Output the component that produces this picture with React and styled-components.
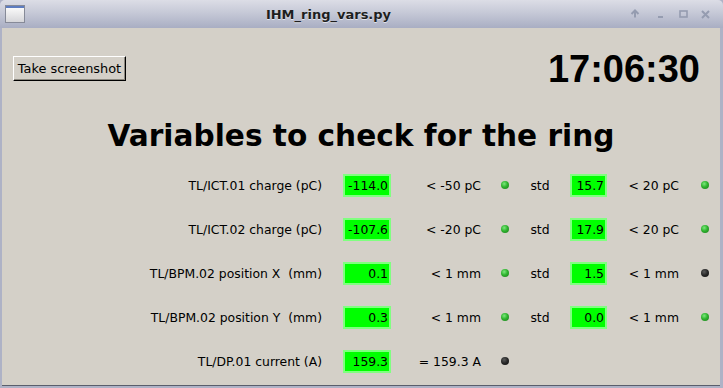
import styled, { createGlobalStyle } from "styled-components";
import { Fragment } from "react";

const ROWS = [
  {
    label: "TL/ICT.01 charge (pC)",
    value: "-114.0",
    limit: "< -50 pC",
    ok: true,
    std: { value: "15.7", limit: "< 20 pC", ok: true },
  },
  {
    label: "TL/ICT.02 charge (pC)",
    value: "-107.6",
    limit: "< -20 pC",
    ok: true,
    std: { value: "17.9", limit: "< 20 pC", ok: true },
  },
  {
    label: "TL/BPM.02 position X  (mm)",
    value: "0.1",
    limit: "< 1 mm",
    ok: true,
    std: { value: "1.5", limit: "< 1 mm", ok: false },
  },
  {
    label: "TL/BPM.02 position Y  (mm)",
    value: "0.3",
    limit: "< 1 mm",
    ok: true,
    std: { value: "0.0", limit: "< 1 mm", ok: true },
  },
  {
    label: "TL/DP.01 current (A)",
    value: "159.3",
    limit: "= 159.3 A",
    ok: false,
  },
];

const GlobalStyle = createGlobalStyle`
  html, body {
    margin: 0;
    padding: 0;
    background: #aeb2c6;
  }
  * {
    box-sizing: border-box;
  }
`;

const Window = styled.div`
  width: 723px;
  height: 388px;
  display: flex;
  flex-direction: column;
  background: #aeb2c6;
  border-radius: 5px 5px 0 0;
  overflow: hidden;
  padding: 0 3px 2px 2px;
`;

const TitleBar = styled.div`
  height: 28px;
  margin: 0 -3px 0 -2px;
  display: flex;
  align-items: center;
  background: linear-gradient(#dcdde6, #c6c9d7 45%, #a9aec3);
`;

const IconSlot = styled.div`
  width: 20px;
  height: 18px;
  margin-left: 5px;
  display: flex;
`;

const Title = styled.div`
  flex: 1;
  text-align: center;
  font-family: "DejaVu Sans", sans-serif;
  font-weight: bold;
  font-size: 13px;
  color: #1e1e1e;
  text-shadow: 0 1px 0 rgba(255, 255, 255, 0.6);
  padding-left: 2px;
`;

const Controls = styled.div`
  width: 80px;
  height: 28px;
  margin-right: 13px;
  display: flex;
`;

const Body = styled.div`
  flex: 1;
  background: #d4d0c8;
  border-bottom: 1px solid #5a5e6c;
  display: flex;
  flex-direction: column;
  font-family: "DejaVu Sans", sans-serif;
  font-size: 12.4px;
  color: #000;
`;

const TopRow = styled.div`
  display: flex;
  justify-content: space-between;
  align-items: flex-start;
  padding: 23px 20px 0 11px;
`;

const ShotButton = styled.button`
  margin-top: 5px;
  height: 25px;
  width: 113px;
  padding: 0;
  font-family: "DejaVu Sans", sans-serif;
  font-size: 12.9px;
  color: #000;
  background: #d4d0c8;
  border: 1px solid;
  border-color: #ffffff #000000 #000000 #ffffff;
  box-shadow: inset -1px -1px 0 #8c8980;
  border-radius: 0;
`;

const Clock = styled.div`
  font-family: "Liberation Sans", Arial, sans-serif;
  font-weight: bold;
  font-size: 38px;
  line-height: 37px;
`;

const Heading = styled.h1`
  margin: 31px 0 0;
  text-align: center;
  font-family: "DejaVu Sans", sans-serif;
  font-weight: bold;
  font-size: 29.6px;
  line-height: 34px;
`;

const Grid = styled.div`
  margin-top: 10px;
  display: grid;
  grid-template-columns: 330px 70px 83px 40px 30px 67px 61px 37px;
  grid-auto-rows: 44px;
  align-items: center;
`;

const Label = styled.div`
  justify-self: end;
  padding-right: 10px;
  white-space: pre;
`;

const ValueBox = styled.div`
  justify-self: center;
  width: ${({ $w }) => $w}px;
  height: 23px;
  background: #00ff00;
  border: 2px solid #80ff80;
  text-align: right;
  padding-right: 1px;
  line-height: 19px;
  white-space: pre;
`;

const Limit = styled.div`
  justify-self: end;
  padding-right: 4px;
  white-space: pre;
`;

const LedCell = styled.div`
  display: flex;
  justify-content: ${({ $shift }) => ($shift ? "flex-start" : "center")};
  padding-left: ${({ $shift }) => $shift || 0}px;
`;

const Led = styled.span`
  width: 8px;
  height: 8px;
  border-radius: 50%;
  background: ${({ $ok }) =>
    $ok
      ? "radial-gradient(circle at 40% 35%, #7de87d 0%, #2fb42f 45%, #1b7a1b 100%)"
      : "radial-gradient(circle at 40% 35%, #5a5a5a 0%, #262626 50%, #0e0e0e 100%)"};
`;

const Std = styled.div`
  justify-self: center;
`;

const Empty = styled.div`
  grid-column: span 4;
`;

function AppIcon() {
  return (
    <svg width="20" height="18" viewBox="0 0 20 18">
      <defs>
        <linearGradient id="icoBody" x1="0" y1="0" x2="0" y2="1">
          <stop offset="0" stopColor="#ffffff" />
          <stop offset="1" stopColor="#d4d4d8" />
        </linearGradient>
      </defs>
      <rect x="0.5" y="0.5" width="19" height="17" fill="url(#icoBody)" stroke="#868a98" />
      <rect x="1" y="1" width="18" height="2" fill="#5d7cc0" />
    </svg>
  );
}

function WinButtons() {
  return (
    <svg width="80" height="28" viewBox="0 0 80 28">
      <g stroke="#959cb0" strokeWidth="2" fill="none">
        <path d="M5 17.5 V10.5 M1.5 14 L5 10.5 L8.5 14" />
        <path d="M28 17 H33" />
        <rect x="50" y="11" width="7" height="6" strokeWidth="1.6" />
        <path d="M72 11 L79 18 M79 11 L72 18" />
      </g>
    </svg>
  );
}

function App() {
  return (
    <>
      <GlobalStyle />
      <Window>
        <TitleBar>
          <IconSlot>
            <AppIcon />
          </IconSlot>
          <Title>IHM_ring_vars.py</Title>
          <Controls>
            <WinButtons />
          </Controls>
        </TitleBar>
        <Body>
          <TopRow>
            <ShotButton>Take screenshot</ShotButton>
            <Clock>17:06:30</Clock>
          </TopRow>
          <Heading>Variables to check for the ring</Heading>
          <Grid>
            {ROWS.map((row, idx) => (
              <Fragment key={idx}>
                <Label>{row.label}</Label>
                <ValueBox $w={48}>{row.value}</ValueBox>
                <Limit>{row.limit}</Limit>
                <LedCell>
                  <Led $ok={row.ok} />
                </LedCell>
                {row.std ? (
                  <>
                    <Std>std</Std>
                    <ValueBox $w={37}>{row.std.value}</ValueBox>
                    <Limit>{row.std.limit}</Limit>
                    <LedCell $shift={18}>
                      <Led $ok={row.std.ok} />
                    </LedCell>
                  </>
                ) : (
                  <Empty />
                )}
              </Fragment>
            ))}
          </Grid>
        </Body>
      </Window>
    </>
  );
}
export default App;
